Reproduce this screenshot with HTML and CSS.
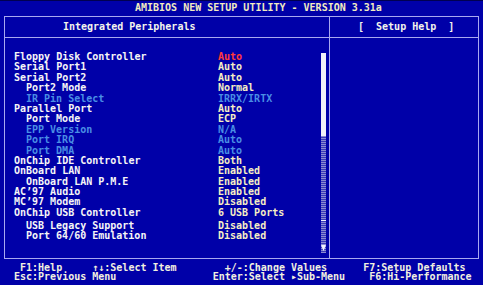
FILE: index.html
```html
<!DOCTYPE html>
<html>
<head>
<meta charset="utf-8">
<link rel="stylesheet" href="styles.css">
</head>
<body>
<div class="screen">
  <div class="title">AMIBIOS NEW SETUP UTILITY - VERSION 3.31a</div>
  <div class="box">
    <div class="hl">Integrated Peripherals</div>
    <div class="hr">[  Setup Help  ]</div>
    <div class="bl">
      <div class="list">
        <div class="row"><span class="lbl">Floppy Disk Controller</span><span class="val sel">Auto</span></div>
        <div class="row"><span class="lbl">Serial Port1</span><span class="val">Auto</span></div>
        <div class="row"><span class="lbl">Serial Port2</span><span class="val">Auto</span></div>
        <div class="row sub"><span class="lbl">Port2 Mode</span><span class="val">Normal</span></div>
        <div class="row sub dis"><span class="lbl">IR Pin Select</span><span class="val">IRRX/IRTX</span></div>
        <div class="row"><span class="lbl">Parallel Port</span><span class="val">Auto</span></div>
        <div class="row sub"><span class="lbl">Port Mode</span><span class="val">ECP</span></div>
        <div class="row sub dis"><span class="lbl">EPP Version</span><span class="val">N/A</span></div>
        <div class="row sub dis"><span class="lbl">Port IRQ</span><span class="val">Auto</span></div>
        <div class="row sub dis"><span class="lbl">Port DMA</span><span class="val">Auto</span></div>
        <div class="row"><span class="lbl">OnChip IDE Controller</span><span class="val">Both</span></div>
        <div class="row"><span class="lbl">OnBoard LAN</span><span class="val">Enabled</span></div>
        <div class="row sub"><span class="lbl">OnBoard LAN P.M.E</span><span class="val">Enabled</span></div>
        <div class="row"><span class="lbl">AC’97 Audio</span><span class="val">Enabled</span></div>
        <div class="row"><span class="lbl">MC’97 Modem</span><span class="val">Disabled</span></div>
        <div class="row"><span class="lbl">OnChip USB Controller</span><span class="val">6 USB Ports</span></div>
        <div class="row sub gap"><span class="lbl">USB Legacy Support</span><span class="val">Disabled</span></div>
        <div class="row sub"><span class="lbl">Port 64/60 Emulation</span><span class="val">Disabled</span></div>
      </div>
      <div class="scroll">
        <div class="thumb"></div>
        <div class="track">
          <div class="tick"></div>
          <svg class="arrow" width="5" height="6" viewBox="0 0 5 6"><polygon points="0,0 5,0 2.5,6" fill="#f0f0ff"/></svg>
        </div>
      </div>
    </div>
    <div class="br"></div>
  </div>
  <pre class="footer"> F1:Help     ↑↓:Select Item        +/-:Change Values      F7:Setup Defaults
Esc:Previous Menu                Enter:Select ▸Sub-Menu    F6:Hi-Performance</pre>
</div>
</body>
</html>
```

FILE: styles.css
```css
html, body {
  margin: 0;
  padding: 0;
  background: #0000a8;
}
.screen {
  width: 483px;
  height: 285px;
  background: #0000a8;
  font-family: "DejaVu Sans Mono", "Liberation Mono", monospace;
  font-weight: bold;
  font-size: 10px;
  color: #f4f4f4;
  overflow: hidden;
}
.title {
  height: 16px;
  line-height: 13px;
  padding-left: 135px;
  color: #f2ecc0;
  white-space: pre;
  box-sizing: border-box;
  border-top: 1px solid #000050;
}
.box {
  margin-left: 4px;
  width: 475px;
  height: 243px;
  box-sizing: border-box;
  border: 1px solid #a8a8f0;
  display: grid;
  grid-template-columns: 325px 148px;
  grid-template-rows: 21px 220px;
}
.hl, .hr {
  box-sizing: border-box;
  border-bottom: 1px solid #a8a8f0;
  line-height: 20px;
  white-space: pre;
  color: #f4f4ec;
}
.hl {
  border-right: 1px solid #a8a8f0;
  padding-left: 58px;
}
.hr {
  padding-left: 28px;
}
.bl {
  box-sizing: border-box;
  border-right: 1px solid #a8a8f0;
  display: flex;
}
.list {
  width: 316px;
  box-sizing: border-box;
  padding-left: 9px;
  padding-top: 14px;
}
.row {
  display: flex;
  height: 10.4px;
  line-height: 10.4px;
  white-space: pre;
}
.lbl {
  width: 204px;
  flex: none;
  color: #f6f6f6;
}
.sub .lbl {
  padding-left: 12px;
  box-sizing: border-box;
}
.val {
  color: #f6eec4;
}
.val.sel {
  color: #ff3a3a;
}
.dis .lbl, .dis .val {
  color: #4a8ee4;
}
.gap {
  margin-top: 2.6px;
}
.scroll {
  margin-top: 15px;
  width: 5px;
  height: 200px;
  display: flex;
  flex-direction: column;
}
.thumb {
  height: 83px;
  background: #f2f2f8;
}
.track {
  flex: 1;
  position: relative;
  background: repeating-linear-gradient(to bottom, #8c8cd0 0px, #8c8cd0 1px, #3a3ab8 1px, #3a3ab8 2px);
  display: flex;
  flex-direction: column;
  justify-content: flex-end;
  align-items: center;
}
.tick {
  position: absolute;
  left: 0;
  top: 84px;
  width: 5px;
  height: 1px;
  background: #f0f0ff;
}
.arrow {
  display: block;
  margin-bottom: 2px;
}
.footer {
  margin: 4px 0 0 14px;
  font-family: "DejaVu Sans Mono", "Liberation Mono", monospace;
  font-weight: bold;
  font-size: 10px;
  line-height: 9px;
  color: #f2f0e0;
}
```
